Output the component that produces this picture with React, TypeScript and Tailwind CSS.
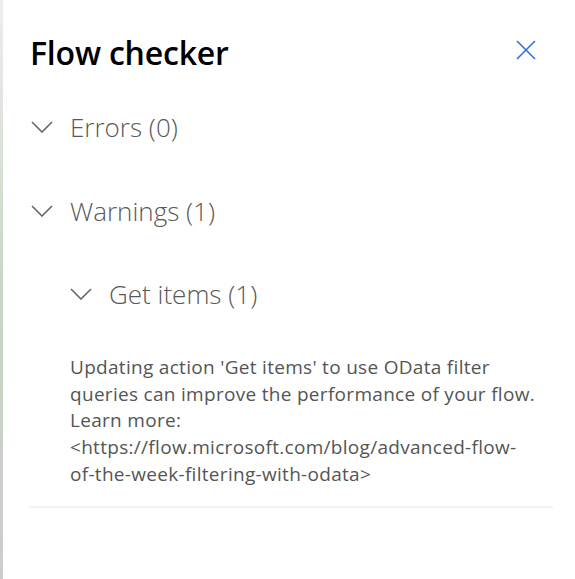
import React from 'react';

function Chevron({ className }: { className?: string }) {
  return (
    <svg viewBox="0 0 22 12" className={className} fill="none" stroke="currentColor" strokeWidth="1.6">
      <path d="M1 1 L11 11 L21 1" />
    </svg>
  );
}

export default function App() {
  const font = { fontFamily: '"Open Sans", "Noto Sans", sans-serif' };
  return (
    <div className="flex w-[575px] h-[579px] bg-white" style={font}>
      {/* left edge of the canvas behind the panel */}
      <div className="w-[3px] h-full bg-gradient-to-b from-[#ededed] via-[#c9d6c6] to-[#cccccc]" />
      <div className="flex-1 flex flex-col pl-[26px] pr-[22px]">
        <div className="flex items-center justify-between pt-[30px] h-[76px] pl-[1px]">
          <h1 className="text-[32px] font-semibold text-black leading-none tracking-[-0.2px]">Flow checker</h1>
          <button className="w-[22px] h-[22px] mr-[15px] mb-[6px] text-[#2f6fe4]">
            <svg viewBox="0 0 20 20" className="w-[20px] h-[20px]" stroke="currentColor" strokeWidth="1.6">
              <path d="M1 1 L19 19 M19 1 L1 19" />
            </svg>
          </button>
        </div>

        <div className="flex items-center gap-[17px] mt-[36px] h-[30px] pl-[2px] text-[#595959]">
          <Chevron className="w-[22px] h-[12px] text-[#666]" />
          <span className="text-[26px] font-light">Errors (0)</span>
        </div>

        <div className="flex items-center gap-[17px] mt-[54px] h-[30px] pl-[2px] text-[#595959]">
          <Chevron className="w-[22px] h-[12px] text-[#666]" />
          <span className="text-[26px] font-light">Warnings (1)</span>
        </div>

        <div className="flex items-center gap-[17px] mt-[53px] h-[30px] pl-[41px] text-[#595959]">
          <Chevron className="w-[22px] h-[12px] text-[#666]" />
          <span className="text-[26px] font-light">Get items (1)</span>
        </div>

        <p className="mt-[45px] ml-[41px] whitespace-nowrap text-[19px] leading-[26.7px] tracking-[0.3px] text-[#555]">
          Updating action 'Get items' to use OData filter
          <br />
          queries can improve the performance of your flow.
          <br />
          Learn more:
          <br />
          &lt;https://flow.microsoft.com/blog/advanced-flow-
          <br />
          of-the-week-filtering-with-odata&gt;
        </p>

        <div className="mt-[18px] h-[2px] bg-[#f2f2f2]" />
      </div>
    </div>
  );
}
